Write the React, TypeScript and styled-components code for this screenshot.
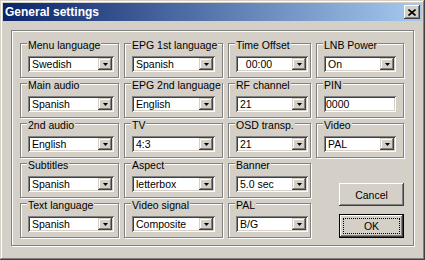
import React from 'react';
import styled, { createGlobalStyle } from 'styled-components';

const face = '#d4d0c8';

const GlobalStyle = createGlobalStyle`
  body {
    margin: 0;
    background: ${face};
    font-family: 'Liberation Sans', Arial, sans-serif;
  }
`;

const Window = styled.div`
  width: 425px;
  height: 260px;
  box-sizing: border-box;
  padding: 3px;
  background: ${face};
  box-shadow: inset -1px -1px #404040, inset 1px 1px ${face},
    inset -2px -2px #808080, inset 2px 2px #fff;
  display: flex;
  flex-direction: column;
`;

const TitleBar = styled.div`
  height: 18px;
  padding: 0 2px;
  display: flex;
  align-items: center;
  justify-content: space-between;
  background: linear-gradient(to right, #0a246a, #a6caf0);
`;

const Title = styled.span`
  color: #fff;
  font-weight: 700;
  font-size: 12px;
  line-height: 18px;
`;

const CloseButton = styled.div`
  width: 16px;
  height: 14px;
  box-sizing: border-box;
  display: flex;
  align-items: center;
  justify-content: center;
  background: ${face};
  box-shadow: inset -1px -1px #404040, inset 1px 1px #fff,
    inset -2px -2px #808080, inset 2px 2px ${face};
`;

const Body = styled.div`
  padding: 9px 8px 0 8px;
`;

const Panel = styled.div`
  border: 1px solid #808080;
  box-shadow: inset 1px 1px #fff, 1px 1px #fff;
  padding: 12px 8px 7px 8px;
  display: grid;
  grid-template-columns: 99px 99px 83px 88px;
  grid-auto-rows: 35px;
  gap: 5px;
`;

const Group = styled.div`
  box-sizing: border-box;
  border: 1px solid #808080;
  box-shadow: inset 1px 1px #fff, 1px 1px #fff;
  padding: 0 0 5px 7px;
  display: flex;
  flex-direction: column;
  align-items: flex-start;
`;

const GroupLabel = styled.span`
  margin: -5px 0 0 -1px;
  padding: 0 1px;
  background: ${face};
  font-size: 10.5px;
  line-height: 12px;
  color: #000;
  white-space: nowrap;
`;

const Field = styled.div<{ $w: number; $pad: number }>`
  margin-top: 5px;
  width: ${(p) => p.$w}px;
  height: 16px;
  box-sizing: border-box;
  padding: 2px;
  display: flex;
  align-items: center;
  background: #fff;
  box-shadow: inset 1px 1px #808080, inset -1px -1px #fff,
    inset 2px 2px #404040, inset -2px -2px ${face};
`;

const FieldText = styled.span<{ $pad: number }>`
  flex: 1;
  padding-left: ${(p) => p.$pad}px;
  font-size: 10.5px;
  line-height: 12px;
  color: #000;
  white-space: pre;
  overflow: hidden;
`;

const ArrowButton = styled.div`
  width: 14px;
  height: 12px;
  box-sizing: border-box;
  display: flex;
  align-items: center;
  justify-content: center;
  background: ${face};
  box-shadow: inset -1px -1px #404040, inset 1px 1px ${face},
    inset -2px -2px #808080, inset 2px 2px #fff;
`;

const ButtonColumn = styled.div`
  grid-column: 4;
  grid-row: 4 / span 2;
  display: flex;
  flex-direction: column;
  align-items: flex-end;
  justify-content: flex-end;
  gap: 8px;
`;

const PushButton = styled.div<{ $default?: boolean }>`
  width: 65px;
  height: ${(p) => (p.$default ? 24 : 23)}px;
  box-sizing: border-box;
  padding: ${(p) => (p.$default ? '3px' : '0')};
  display: flex;
  align-items: center;
  justify-content: center;
  background: ${face};
  border: ${(p) => (p.$default ? '1px solid #000' : 'none')};
  box-shadow: inset -1px -1px #404040, inset 1px 1px #fff,
    inset -2px -2px #808080, inset 2px 2px ${face};
  font-size: 10.5px;
  color: #000;
`;

const FocusRing = styled.span`
  flex: 1;
  align-self: stretch;
  display: flex;
  align-items: center;
  justify-content: center;
  border: 1px dotted #000;
`;

type Cell = { label: string; value: string; text?: boolean } | null;

const widths = [86, 83, 72, 72];

const rows: Cell[][] = [
  [
    { label: 'Menu language', value: 'Swedish' },
    { label: 'EPG 1st language', value: 'Spanish' },
    { label: 'Time Offset', value: '  00:00' },
    { label: 'LNB Power', value: 'On' },
  ],
  [
    { label: 'Main audio', value: 'Spanish' },
    { label: 'EPG 2nd language', value: 'English' },
    { label: 'RF channel', value: '21' },
    { label: 'PIN', value: '0000', text: true },
  ],
  [
    { label: '2nd audio', value: 'English' },
    { label: 'TV', value: '4:3' },
    { label: 'OSD transp.', value: '21' },
    { label: 'Video', value: 'PAL' },
  ],
  [
    { label: 'Subtitles', value: 'Spanish' },
    { label: 'Aspect', value: 'letterbox' },
    { label: 'Banner', value: '5.0 sec' },
    null,
  ],
  [
    { label: 'Text language', value: 'Spanish' },
    { label: 'Video signal', value: 'Composite' },
    { label: 'PAL', value: 'B/G' },
    null,
  ],
];

const DownArrow = () => (
  <svg width="5" height="3" viewBox="0 0 5 3">
    <polygon points="0,0 5,0 2.5,3" fill="#000" />
  </svg>
);

const CloseIcon = () => (
  <svg width="8" height="7" viewBox="0 0 8 7">
    <path d="M0.5 0.5 L7.5 6.5 M7.5 0.5 L0.5 6.5" stroke="#000" strokeWidth="1.6" />
  </svg>
);

const SettingGroup = ({ cell, width }: { cell: NonNullable<Cell>; width: number }) => (
  <Group>
    <GroupLabel>{cell.label}</GroupLabel>
    <Field $w={width} $pad={0}>
      <FieldText $pad={cell.text ? 0 : 2}>{cell.value}</FieldText>
      {!cell.text && (
        <ArrowButton>
          <DownArrow />
        </ArrowButton>
      )}
    </Field>
  </Group>
);

export default function App() {
  return (
    <>
      <GlobalStyle />
      <Window>
        <TitleBar>
          <Title>General settings</Title>
          <CloseButton>
            <CloseIcon />
          </CloseButton>
        </TitleBar>
        <Body>
          <Panel>
            {rows.map((row, r) =>
              row.map((cell, c) =>
                cell ? (
                  <SettingGroup key={`${r}-${c}`} cell={cell} width={widths[c]} />
                ) : null
              )
            )}
            <ButtonColumn>
              <PushButton>Cancel</PushButton>
              <PushButton $default>
                <FocusRing>OK</FocusRing>
              </PushButton>
            </ButtonColumn>
          </Panel>
        </Body>
      </Window>
    </>
  );
}
